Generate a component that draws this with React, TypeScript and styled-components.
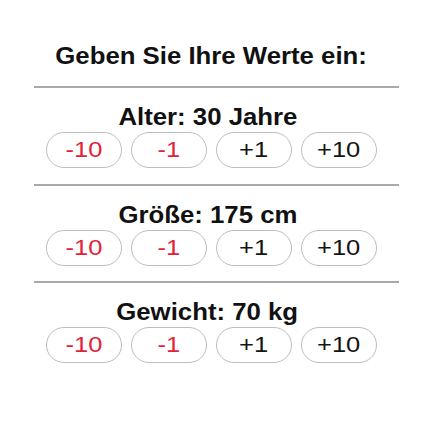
import React, { useState } from 'react';
import styled, { createGlobalStyle } from 'styled-components';

const GlobalStyle = createGlobalStyle`
  html, body {
    margin: 0;
    padding: 0;
    background: #ffffff;
  }
  body {
    font-family: "Liberation Sans", Arial, sans-serif;
    color: #111111;
  }
`;

type Field = {
  key: string;
  label: string;
  unit: string;
  initial: number;
};

const fields: Field[] = [
  { key: 'age', label: 'Alter', unit: 'Jahre', initial: 30 },
  { key: 'height', label: 'Größe', unit: 'cm', initial: 175 },
  { key: 'weight', label: 'Gewicht', unit: 'kg', initial: 70 },
];

const steps = [-10, -1, 1, 10];

const App: React.FC = () => {
  const [values, setValues] = useState<Record<string, number>>(() =>
    Object.fromEntries(fields.map((f) => [f.key, f.initial]))
  );

  const change = (key: string, delta: number) => {
    setValues((v) => ({ ...v, [key]: v[key] + delta }));
  };

  return (
    <>
      <GlobalStyle />
      <Panel>
        <Title>
          <Wide>Geben Sie Ihre Werte ein:</Wide>
        </Title>
        {fields.map((f) => (
          <Section key={f.key}>
            <Divider />
            <Label>
              <Wide>{`${f.label}: ${values[f.key]} ${f.unit}`}</Wide>
            </Label>
            <Row>
              {steps.map((s) => (
                <StepButton
                  key={s}
                  type="button"
                  $negative={s < 0}
                  onClick={() => change(f.key, s)}
                >
                  <ButtonText>{s > 0 ? `+${s}` : `${s}`}</ButtonText>
                </StepButton>
              ))}
            </Row>
          </Section>
        ))}
      </Panel>
    </>
  );
};

export default App;

const Panel = styled.div`
  width: 365px;
  margin-left: 34px;
  padding-top: 43px;
  display: flex;
  flex-direction: column;
`;

const Wide = styled.span`
  display: inline-block;
  transform: scaleX(1.12);
  white-space: nowrap;
`;

const Title = styled.h1`
  margin: 0 0 16px;
  padding-right: 11px;
  font-size: 23px;
  line-height: 27px;
  font-weight: 700;
  text-align: center;
`;

const Section = styled.section`
  display: flex;
  flex-direction: column;
  padding-bottom: 15.5px;
`;

const Divider = styled.div`
  height: 2px;
  background: #a9a9a9;
  margin-bottom: 16px;
`;

const Label = styled.h2`
  margin: 0;
  padding-right: 18px;
  font-size: 23px;
  line-height: 27px;
  font-weight: 700;
  text-align: center;
`;

const Row = styled.div`
  display: flex;
  gap: 9px;
  margin-top: 1px;
  padding-left: 12px;
`;

const StepButton = styled.button<{ $negative: boolean }>`
  width: 76px;
  height: 36px;
  padding: 0;
  border: 1px solid #bdbdbd;
  border-radius: 18px;
  background: #ffffff;
  font-family: "Liberation Sans", Arial, sans-serif;
  font-size: 22px;
  color: ${(p) => (p.$negative ? '#e2223a' : '#141414')};
  display: flex;
  align-items: center;
  justify-content: center;
  cursor: pointer;
`;

const ButtonText = styled.span`
  display: inline-block;
  transform: scaleX(1.16);
`;
